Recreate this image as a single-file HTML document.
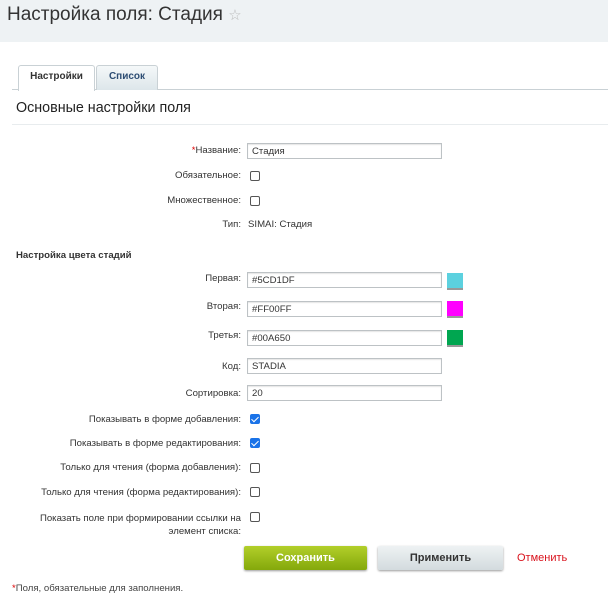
<!DOCTYPE html>
<html><head><meta charset="utf-8"><style>
*{margin:0;padding:0;box-sizing:border-box}
body{width:608px;height:600px;background:#eef2f4;font-family:"Liberation Sans",Arial,sans-serif;position:relative;overflow:hidden;color:#333}
.a{position:absolute}
h1{position:absolute;left:7px;top:4px;font-weight:normal;font-size:19px;color:#333;white-space:nowrap}
.panel{position:absolute;left:0;top:42px;width:608px;height:558px;background:#fff}
.tab{position:absolute;top:65px;height:25px;border:1px solid #c9d1d5;border-bottom:none;border-radius:3px 3px 0 0;font-size:10px;font-weight:bold;text-align:center;line-height:22px}
.lbl{position:absolute;right:367px;font-size:9.6px;color:#333;white-space:nowrap;text-align:right}
.inp{position:absolute;left:247px;width:195px;height:16px;border:1px solid #bdc2c5;font-size:9.6px;padding-left:4px;padding-top:1px;line-height:14px;color:#333;box-shadow:inset 0 1px 1px #e5e5e5}
.cb{position:absolute;left:250px;width:10px;height:10px;border:1px solid #555;border-radius:2px;background:#fff}
.cbc{background:#1a73e8;border-color:#1a73e8}
.cbc:after{content:"";position:absolute;left:2px;top:0px;width:3px;height:6px;border:solid #fff;border-width:0 1.5px 1.5px 0;transform:rotate(45deg)}
.sw{position:absolute;left:447px;width:16px;height:17px;border-bottom:2px solid #999}
</style></head><body>
<h1>Настройка поля: Стадия <span style="font-size:15px;color:#bbb">☆</span></h1>
<div class="panel"></div>
<div class="a" style="left:12px;top:89px;width:596px;height:1px;background:#c9d1d5"></div>
<div class="tab" style="left:18px;width:77px;background:#fff;height:26px;color:#333">Настройки</div>
<div class="tab" style="left:96px;width:62px;background:linear-gradient(#f5f8f9,#dde6ea);color:#2d4d73">Список</div>
<div class="a" style="left:16px;top:100px;font-size:14.3px;color:#222">Основные настройки поля</div>
<div class="a" style="left:12px;top:124px;width:596px;height:1px;background:#e8ecee"></div>

<div class="lbl" style="top:145px"><span style="color:#d00">*</span>Название:</div><div class="inp" style="top:143px">Стадия</div>
<div class="lbl" style="top:170px">Обязательное:</div><div class="cb" style="top:171px"></div>
<div class="lbl" style="top:195px">Множественное:</div><div class="cb" style="top:196px"></div>
<div class="lbl" style="top:219px">Тип:</div><div class="a" style="left:248px;top:219px;font-size:9.6px">SIMAI: Стадия</div>
<div class="a" style="left:16px;top:250px;font-size:9.6px;font-weight:bold">Настройка цвета стадий</div>

<div class="lbl" style="top:273px">Первая:</div><div class="inp" style="top:272px">#5CD1DF</div><div class="sw" style="top:273px;background:#5cd1df"></div>
<div class="lbl" style="top:301px">Вторая:</div><div class="inp" style="top:301px">#FF00FF</div><div class="sw" style="top:301px;background:#ff00ff"></div>
<div class="lbl" style="top:330px">Третья:</div><div class="inp" style="top:330px">#00A650</div><div class="sw" style="top:330px;background:#00a650"></div>
<div class="lbl" style="top:361px">Код:</div><div class="inp" style="top:358px">STADIA</div>
<div class="lbl" style="top:388px">Сортировка:</div><div class="inp" style="top:385px">20</div>

<div class="lbl" style="top:414px">Показывать в форме добавления:</div><div class="cb cbc" style="top:414px"></div>
<div class="lbl" style="top:438px">Показывать в форме редактирования:</div><div class="cb cbc" style="top:438px"></div>
<div class="lbl" style="top:462px">Только для чтения (форма добавления):</div><div class="cb" style="top:463px"></div>
<div class="lbl" style="top:487px">Только для чтения (форма редактирования):</div><div class="cb" style="top:487px"></div>
<div class="lbl" style="top:512px;line-height:13px">Показать поле при формировании ссылки на<br>элемент списка:</div><div class="cb" style="top:512px"></div>

<div class="a" style="left:244px;top:546px;width:123px;height:24px;border-radius:2px;background:linear-gradient(#b2cf2a,#84a80b);color:#fff;font-size:11px;font-weight:bold;text-align:center;line-height:24px;box-shadow:0 1px 2px #999">Сохранить</div>
<div class="a" style="left:378px;top:546px;width:125px;height:24px;border-radius:2px;background:linear-gradient(#eef2f3,#d3dbde);color:#333;font-size:11px;font-weight:bold;text-align:center;line-height:24px;box-shadow:0 1px 2px #999">Применить</div>
<div class="a" style="left:517px;top:552px;font-size:11px;color:#d9121c">Отменить</div>
<div class="a" style="left:12px;top:583px;font-size:9.6px;color:#444"><span style="color:#d00">*</span>Поля, обязательные для заполнения.</div>
</body></html>
